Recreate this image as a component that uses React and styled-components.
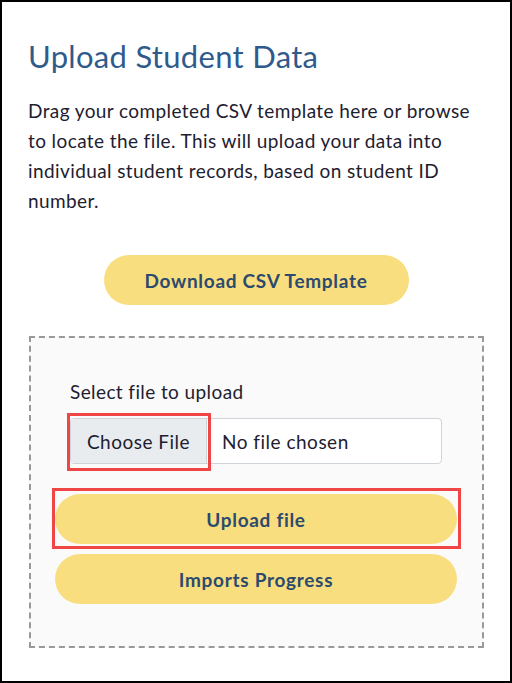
import React from "react";
import styled, { createGlobalStyle } from "styled-components";

const Global = createGlobalStyle`
  html, body { margin: 0; padding: 0; background: #fff; }
  body { font-family: Lato, "Open Sans", sans-serif; }
  * { box-sizing: border-box; }
`;

const Frame = styled.div`
  width: 512px;
  height: 683px;
  border: 2px solid #000;
  background: #fff;
  padding: 34px 26px 0 26px;
  display: flex;
  flex-direction: column;
`;

const Title = styled.h1`
  margin: 0;
  font-family: Lato, sans-serif;
  font-weight: 400;
  font-size: 31px;
  line-height: 40px;
  color: #2f5b8c;
  letter-spacing: 0.3px;
`;

const Intro = styled.p`
  margin: 20px 0 0 0;
  font-size: 19px;
  line-height: 30px;
  letter-spacing: 0.4px;
  color: #1e2030;
`;

const Center = styled.div`
  display: flex;
  justify-content: center;
  margin-top: 39px;
`;

const Pill = styled.button`
  display: block;
  height: 50px;
  width: ${(p) => p.$w || "100%"};
  border: none;
  border-radius: 25px;
  background: #f9de7f;
  color: #2c4a6e;
  font-family: Lato, sans-serif;
  font-weight: 700;
  font-size: 19px;
  letter-spacing: 0.7px;
  cursor: pointer;
`;

const Marked = styled.div`
  border: 3px solid #f04545;
  margin: -6px -4px -5px -3px;
  padding: 3px 1px 2px 0;
`;

const DropZone = styled.div`
  margin: 31px 0 0 1px;
  width: 455px;
  border: 2px dashed #999;
  background: #fafafa;
  padding: 40px 25px 42px 24px;
  display: flex;
  flex-direction: column;
`;

const Group = styled.div`
  margin: 0 15px 0 15px;
  display: flex;
  flex-direction: column;
`;

const Label = styled.label`
  font-size: 19px;
  line-height: 28px;
  letter-spacing: 0.4px;
  color: #1e2030;
  margin-bottom: 12px;
`;

const FileBox = styled.div`
  display: flex;
  height: 46px;
  width: 372px;
  border: 1px solid #ced4da;
  border-radius: 4px;
  background: #fff;
`;

const ChooseBtn = styled.span`
  position: relative;
  display: flex;
  align-items: center;
  justify-content: center;
  width: 136px;
  background: #e9ecef;
  border-right: 1px solid #ced4da;
  border-radius: 3px 0 0 3px;
  font-size: 19px;
  letter-spacing: 0.5px;
  color: #1e2030;

  &::after {
    content: "";
    position: absolute;
    left: -4px;
    top: -6px;
    right: -5px;
    bottom: -8px;
    border: 3px solid #f04545;
    pointer-events: none;
  }
`;

const FileName = styled.span`
  display: flex;
  align-items: center;
  padding-left: 15px;
  font-size: 19px;
  letter-spacing: 0.5px;
  color: #1e2030;
`;

const Stack = styled.div`
  margin-top: 30px;
  display: flex;
  flex-direction: column;
  gap: 10px;
`;

export default function App() {
  return (
    <>
      <Global />
      <Frame>
        <Title>Upload Student Data</Title>
        <Intro>
          Drag your completed CSV template here or browse to locate the file.
          This will upload your data into individual student records, based on
          student ID number.
        </Intro>
        <Center>
          <Pill $w="305px">Download CSV Template</Pill>
        </Center>
        <DropZone>
          <Group>
            <Label>Select file to upload</Label>
            <FileBox>
              <ChooseBtn>Choose File</ChooseBtn>
              <FileName>No file chosen</FileName>
            </FileBox>
          </Group>
          <Stack>
            <Marked>
              <Pill>Upload file</Pill>
            </Marked>
            <Pill>Imports Progress</Pill>
          </Stack>
        </DropZone>
      </Frame>
    </>
  );
}
